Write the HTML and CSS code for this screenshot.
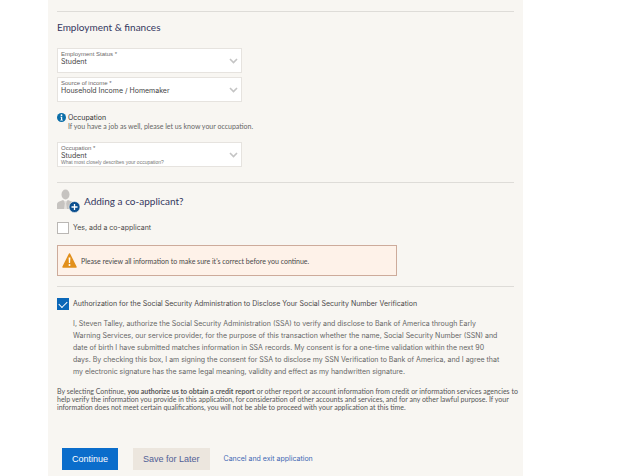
FILE: index.html
```html
<!DOCTYPE html>
<html lang="en">
<head>
<meta charset="utf-8">
<title>Employment &amp; finances</title>
<link rel="stylesheet" href="styles.css">
</head>
<body>
<main class="panel">
  <form>
    <section class="section employment">
      <h2>Employment &amp; finances</h2>
      <div class="field">
        <label for="status">Employment Status *</label>
        <select id="status"><option>Student</option></select>
        <svg class="chevron" viewBox="0 0 9 6" aria-hidden="true"><path d="M1 1l3.5 3.5L8 1"/></svg>
      </div>
      <div class="field">
        <label for="income">Source of income *</label>
        <select id="income"><option>Household Income / Homemaker</option></select>
        <svg class="chevron" viewBox="0 0 9 6" aria-hidden="true"><path d="M1 1l3.5 3.5L8 1"/></svg>
      </div>
      <div class="note">
        <svg class="info" viewBox="0 0 9 9" aria-hidden="true"><circle cx="4.5" cy="4.5" r="4.5" fill="#0b6ea8"/><circle cx="4.5" cy="2.2" r=".9" fill="#fff"/><path d="M3.4 3.7h1.8v3h.7v.8H3.3v-.8H4V4.5h-.6z" fill="#fff"/></svg>
        <div>
          <h3>Occupation</h3>
          <p>If you have a job as well, please let us know your occupation.</p>
        </div>
      </div>
      <div class="field">
        <label for="occupation">Occupation *</label>
        <select id="occupation" aria-describedby="hint"><option>Student</option></select>
        <small id="hint">What most closely describes your occupation?</small>
        <svg class="chevron" viewBox="0 0 9 6" aria-hidden="true"><path d="M1 1l3.5 3.5L8 1"/></svg>
      </div>
    </section>

    <section class="section applicant">
      <div class="title">
        <svg class="person" viewBox="0 0 23 24" aria-hidden="true"><ellipse cx="8.5" cy="5.5" rx="4" ry="5" fill="#c6c3c0"/><path d="M0 20v-4.5Q0 13 3 12.3L6 11l2.5 2L11 11l3 1.300Q17 13 17 15.500V20z" fill="#c6c3c0"/><path d="M7 12.200h3l-.8 2 .8 5.800H7l.8-5.800z" fill="#e4e1de"/><circle cx="17.500" cy="18" r="5.500" fill="#0b4f8f" stroke="#f8f6f2" stroke-width=".6"/><path d="M14.500 18h6M17.500 15v6" stroke="#fff" stroke-width="1.300"/></svg>
        <h2>Adding a co-applicant?</h2>
      </div>
      <label class="check"><input type="checkbox"><span>Yes, add a co-applicant</span></label>
      <div class="alert" role="alert">
        <svg class="warning" viewBox="0 0 15 15" aria-hidden="true"><path d="M7.500 1L14 14H1z" fill="#e2901c" stroke="#e2901c" stroke-width="1.500" stroke-linejoin="round"/><path d="M6.600 4.500h1.800L8.100 10H6.900z" fill="#fff"/><circle cx="7.500" cy="12" r="1" fill="#fff"/></svg>
        <p>Please review all information to make sure it's correct before you continue.</p>
      </div>
    </section>

    <section class="section authorization">
      <label class="check"><input type="checkbox" checked><span>Authorization for the Social Security Administration to Disclose Your Social Security Number Verification</span></label>
      <p class="consent">I, Steven Talley, authorize the Social Security Administration (SSA) to verify and disclose to Bank of America through Early<br>Warning Services, our service provider, for the purpose of this transaction whether the name, Social Security Number (SSN) and<br>date of birth I have submitted matches information in SSA records. My consent is for a one-time validation within the next 90<br>days. By checking this box, I am signing the consent for SSA to disclose my SSN Verification to Bank of America, and I agree that<br>my electronic signature has the same legal meaning, validity and effect as my handwritten signature.</p>
      <p class="legal">By selecting Continue, <strong>you authorize us to obtain a credit report</strong> or other report or account information from credit or information services agencies to<br>help verify the information you provide in this application, for consideration of other accounts and services, and for any other lawful purpose. If your<br>information does not meet certain qualifications, you will not be able to proceed with your application at this time.</p>
      <div class="actions">
        <button class="primary" type="submit">Continue</button>
        <button class="secondary" type="button">Save for Later</button>
        <a href="#">Cancel and exit application</a>
      </div>
    </section>
  </form>
</main>
</body>
</html>
```
FILE: styles.css
```css
* { box-sizing: border-box; }
body {
  margin: 0;
  background: #fff;
  color: #4a4848;
  font: 7px/8px Lato, Arial, sans-serif;
}
h2, h3, p { margin: 0; font-weight: 400; }
.panel {
  width: 74.2%;
  min-height: 100vh;
  margin-left: 7.5%;
  padding: 11px 9px 6px;
  background: #f8f6f2;
}
.section { border-top: 1px solid #dedcd8; white-space: nowrap; }
h2 {
  color: #34375f;
  font: 10px/14px Lato, sans-serif;
}
.employment { padding: 8px 0 11px; }
.employment h2 { margin-bottom: 14px; }
.field {
  position: relative;
  display: flex;
  flex-direction: column;
  width: 185px;
  height: 25px;
  margin-bottom: 4px;
  padding: 2px 3px;
  border: 1px solid #e6e3df;
  background: #fff;
}
.field label { font: 6px/6px "Liberation Sans", Arial, sans-serif; color: #6b6969; }
.field select {
  appearance: none;
  width: 100%;
  padding: 0;
  border: 0;
  background: none;
  color: #444;
  font: 7px/9px Inter, Arial, sans-serif;
}
.field small { font: 5px/5px "Liberation Sans", Arial, sans-serif; color: #777; }
.chevron {
  position: absolute;
  right: 3px;
  top: 9px;
  width: 9px;
  height: 6px;
  fill: none;
  stroke: #c4c4c4;
  stroke-width: 1.6;
  pointer-events: none;
}
.note { display: flex; gap: 2px; margin: 11px 0; }
.info { width: 9px; height: 9px; }
.note h3 { font: 7px/9px Inter, Arial, sans-serif; color: #333; }
.note p { line-height: 9px; color: #666; }
.applicant { padding: 6px 0 10px; }
.title { display: flex; align-items: center; gap: 4px; margin-bottom: 9px; }
.person { width: 23px; height: 24px; }
.check { display: flex; align-items: center; gap: 4px; font: 7px/12px Inter, Arial, sans-serif; }
.check input {
  appearance: none;
  width: 12px;
  height: 12px;
  margin: 0;
  border: 1px solid #bab7b4;
  background: #fff;
}
.check input:checked {
  border-color: #0b67b8;
  background: #0b67b8;
  display: grid;
  place-items: center;
}
.check input:checked::before {
  content: "";
  width: 7px;
  height: 4px;
  border: solid #fff;
  border-width: 0 0 1px 1px;
  transform: translateY(-1px) rotate(-45deg);
}
.alert {
  display: flex;
  align-items: center;
  gap: 4px;
  width: 340px;
  height: 31px;
  margin-top: 11px;
  padding: 0 4px;
  border: 1px solid #cdab9b;
  background: #fef2e9;
}
.warning { width: 15px; height: 15px; }
.authorization { padding-top: 11px; }
.consent { margin: 8px 0 9px 16px; font: 7px/12px Inter, Arial, sans-serif; color: #666; }
.legal { color: #555; }
.actions { display: flex; align-items: center; margin: 37px 0 0 5px; }
.actions button {
  height: 22px;
  padding: 0 10px;
  border: 0;
  font: 9px/12px "Liberation Sans", Arial, sans-serif;
}
.actions .primary { background: #0b6dcb; color: #fff; }
.actions .secondary { margin: 0 14px 0 15px; background: #ece6de; color: #526096; }
.actions a { color: #3f68b4; font: 7px/12px Inter, Arial, sans-serif; text-decoration: none; }
```
